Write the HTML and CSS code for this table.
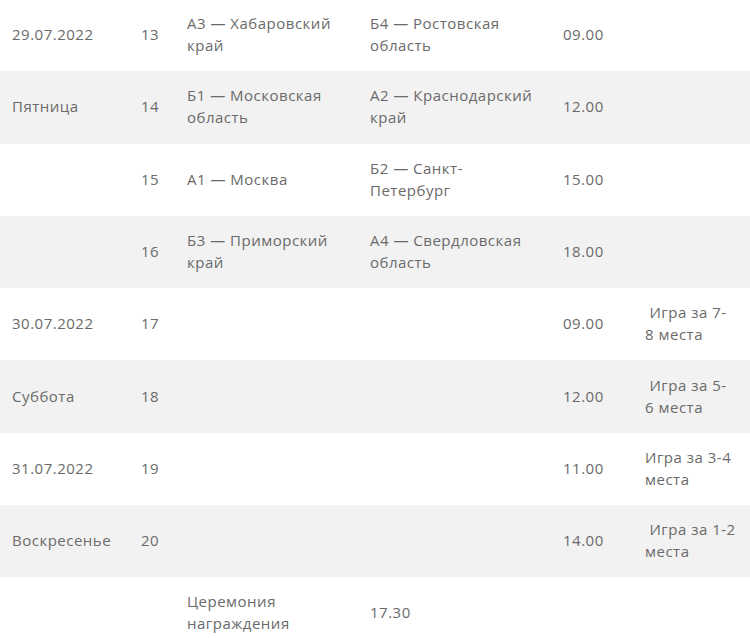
FILE: index.html
```html
<!DOCTYPE html>
<html lang="ru">
<head>
<meta charset="utf-8">
<link rel="stylesheet" href="styles.css">
</head>
<body>
<div class="wrap">
<table class="schedule">
<colgroup>
<col class="c-date"><col class="c-num"><col class="c-team"><col class="c-team2"><col class="c-time"><col class="c-note">
</colgroup>
<tbody>
<tr><td>29.07.2022</td><td>13</td><td>А3 — Хабаровский край</td><td>Б4 — Ростовская область</td><td>09.00</td><td></td></tr>
<tr><td>Пятница</td><td>14</td><td>Б1 — Московская область</td><td>А2 — Краснодарский край</td><td>12.00</td><td></td></tr>
<tr><td></td><td>15</td><td>А1 — Москва</td><td>Б2 — Санкт-Петербург</td><td>15.00</td><td></td></tr>
<tr><td></td><td>16</td><td>Б3 — Приморский край</td><td>А4 — Свердловская область</td><td>18.00</td><td></td></tr>
<tr><td>30.07.2022</td><td>17</td><td></td><td></td><td>09.00</td><td>&nbsp;Игра за 7-8&nbsp;места</td></tr>
<tr><td>Суббота</td><td>18</td><td></td><td></td><td>12.00</td><td>&nbsp;Игра за 5-6&nbsp;места</td></tr>
<tr><td>31.07.2022</td><td>19</td><td></td><td></td><td>11.00</td><td>Игра за 3-4 места</td></tr>
<tr><td>Воскресенье</td><td>20</td><td></td><td></td><td>14.00</td><td>&nbsp;Игра за 1-2 места</td></tr>
<tr><td></td><td></td><td>Церемония награждения</td><td>17.30</td><td></td><td></td></tr>
</tbody>
</table>
</div>
</body>
</html>
```

FILE: styles.css
```css
html, body {
  margin: 0;
  padding: 0;
  background: #ffffff;
}
.wrap {
  margin-top: -1px;
}
.schedule {
  width: 750px;
  border-collapse: collapse;
  table-layout: fixed;
  font-family: "Open Sans", "Liberation Sans", sans-serif;
  font-size: 15px;
  letter-spacing: 0.5px;
  line-height: 22px;
  color: #6a6a6a;
}
.c-date { width: 129px; }
.c-num { width: 46px; }
.c-team { width: 183px; }
.c-team2 { width: 193px; }
.c-time { width: 82px; }
.c-note { width: 117px; }
.schedule td {
  padding: 13.15px 12px 15.15px;
  height: 44px;
  vertical-align: middle;
}
.schedule tr:nth-child(even) td {
  background: #f2f2f2;
}
```
